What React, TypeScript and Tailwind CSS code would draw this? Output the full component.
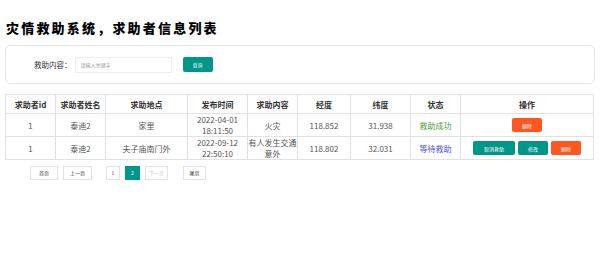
import React from "react";

const cols = [50, 50, 82, 60, 50, 53, 60, 50, 133];
const heads = ["求助者id", "求助者姓名", "求助地点", "发布时间", "求助内容", "经度", "纬度", "状态", "操作"];

const Btn = ({ label, color, w }: { label: string; color: string; w: string }) => (
  <span className={`inline-flex h-[14px] items-center justify-center rounded-[2px] text-[5px] text-white ${color} ${w}`}>
    {label}
  </span>
);

const PageBtn = ({ label, w, active, disabled }: { label: string; w: string; active?: boolean; disabled?: boolean }) => (
  <span
    className={`flex h-[14px] items-center justify-center border text-[5px] ${w} ${
      active ? "border-[#009688] bg-[#009688] text-white" : disabled ? "border-[#e2e2e2] text-[#d2d2d2]" : "border-[#e2e2e2] text-[#333]"
    }`}
  >
    {label}
  </span>
);

export default function App() {
  return (
    <div className="h-[260px] w-[600px] bg-white font-['Noto_Sans_CJK_SC','Open_Sans',sans-serif] text-[#555]">
      <h1 className="pl-[6px] pt-[19px] text-[13px] font-black leading-[18px] tracking-[2.2px] text-black">
        灾情救助系统，求助者信息列表
      </h1>
      <div className="mx-[5px] mt-[8px] flex h-[39px] items-center rounded-[6px] border border-[#e6e6e6] pl-[28px]">
        <span className="text-[7.5px] text-[#333]">救助内容：</span>
        <span className="ml-[3px] flex h-[16px] w-[97px] items-center border border-[#eee] pl-[5px] text-[5px] text-[#999]">
          请输入关键字
        </span>
        <span className="ml-[11px] flex h-[15px] w-[30px] items-center justify-center rounded-[2px] bg-[#009688] text-[5px] text-white">
          查询
        </span>
      </div>
      <table className="mx-[5px] mt-[10px] table-fixed border-collapse text-center text-[8px] leading-[11px]">
        <colgroup>
          {cols.map((w, i) => (
            <col key={i} style={{ width: w }} />
          ))}
        </colgroup>
        <thead>
          <tr className="h-[19px]">
            {heads.map((h) => (
              <th key={h} className="border border-[#e2e2e2] font-bold text-[#333]">
                {h}
              </th>
            ))}
          </tr>
        </thead>
        <tbody>
          <tr className="h-[22px]">
            <td className="border border-[#e2e2e2]">1</td>
            <td className="border border-[#e2e2e2]">泰迪2</td>
            <td className="border border-[#e2e2e2]">家里</td>
            <td className="border border-[#e2e2e2]">
              2022-04-01
              <br />
              18:11:50
            </td>
            <td className="border border-[#e2e2e2]">火灾</td>
            <td className="border border-[#e2e2e2]">118.852</td>
            <td className="border border-[#e2e2e2]">31.938</td>
            <td className="border border-[#e2e2e2] text-[#4f9a3b]">救助成功</td>
            <td className="border border-[#e2e2e2]">
              <div className="flex justify-center">
                <Btn label="删除" color="bg-[#ff5722]" w="w-[30px]" />
              </div>
            </td>
          </tr>
          <tr className="h-[22px]">
            <td className="border border-[#e2e2e2]">1</td>
            <td className="border border-[#e2e2e2]">泰迪2</td>
            <td className="border border-[#e2e2e2]">夫子庙南门外</td>
            <td className="border border-[#e2e2e2]">
              2022-09-12
              <br />
              22:50:10
            </td>
            <td className="border border-[#e2e2e2]">
              有人发生交通
              <br />
              意外
            </td>
            <td className="border border-[#e2e2e2]">118.802</td>
            <td className="border border-[#e2e2e2]">32.031</td>
            <td className="border border-[#e2e2e2] text-[#4b4be8]">等待救助</td>
            <td className="border border-[#e2e2e2]">
              <div className="flex justify-center gap-[3px]">
                <Btn label="取消救助" color="bg-[#009688]" w="w-[42px]" />
                <Btn label="修改" color="bg-[#009688]" w="w-[30px]" />
                <Btn label="删除" color="bg-[#ff5722]" w="w-[30px]" />
              </div>
            </td>
          </tr>
        </tbody>
      </table>
      <div className="ml-[30px] mt-[6px] flex gap-[5px]">
        <PageBtn label="首页" w="w-[28px]" />
        <PageBtn label="上一页" w="w-[29px]" />
        <span className="w-[4px]" />
        <PageBtn label="1" w="w-[14px]" />
        <PageBtn label="2" w="w-[15px]" active />
        <PageBtn label="下一页" w="w-[23px]" disabled />
        <span className="w-[5px]" />
        <PageBtn label="尾页" w="w-[23px]" />
      </div>
    </div>
  );
}
